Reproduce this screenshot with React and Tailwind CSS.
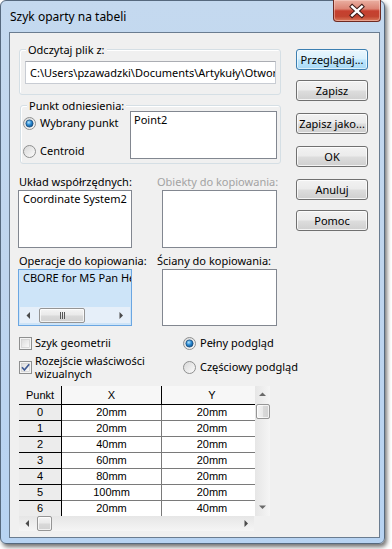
import React from 'react';

const rows = [
  ['0', '20mm', '20mm'],
  ['1', '20mm', '20mm'],
  ['2', '40mm', '20mm'],
  ['3', '60mm', '20mm'],
  ['4', '80mm', '20mm'],
  ['5', '100mm', '20mm'],
  ['6', '20mm', '40mm'],
];

const Radio = ({ checked }) => (
  <svg width="13" height="13" viewBox="0 0 13 13" className="shrink-0">
    <defs>
      <linearGradient id="rbg" x1="0" y1="0" x2="1" y2="1">
        <stop offset="0" stopColor="#d6d6d6" />
        <stop offset="1" stopColor="#fdfdfd" />
      </linearGradient>
      <radialGradient id="rdot" cx="0.4" cy="0.35" r="0.7">
        <stop offset="0" stopColor="#b6e6fd" />
        <stop offset="0.5" stopColor="#2a8ad4" />
        <stop offset="1" stopColor="#0d4d84" />
      </radialGradient>
    </defs>
    <circle cx="6.5" cy="6.5" r="6" fill="url(#rbg)" stroke="#8e8f8f" />
    {checked && <circle cx="6.5" cy="6.5" r="3.6" fill="url(#rdot)" stroke="#1c5180" strokeWidth="0.8" />}
  </svg>
);

const Checkbox = ({ checked }) => (
  <svg width="13" height="13" viewBox="0 0 13 13" className="shrink-0">
    <defs>
      <linearGradient id="cbg" x1="0" y1="0" x2="1" y2="1">
        <stop offset="0" stopColor="#dcdcdc" />
        <stop offset="1" stopColor="#fbfbfb" />
      </linearGradient>
    </defs>
    <rect x="0.5" y="0.5" width="12" height="12" fill="#f4f4f4" stroke="#8e8f8f" />
    <rect x="2.5" y="2.5" width="8" height="8" fill="url(#cbg)" stroke="#c8c8c8" strokeWidth="0.6" />
    {checked && <path d="M3 6.3 L5.4 9 L10.2 3.2" fill="none" stroke="#3f5a94" strokeWidth="1.7" />}
  </svg>
);

const Arrow = ({ dir, color = '#4b4b4b' }) => {
  const d = {
    left: 'M5 0 L5 7 L1.5 3.5 Z',
    right: 'M1.5 0 L1.5 7 L5 3.5 Z',
    up: 'M0 5 L7 5 L3.5 1.5 Z',
    down: 'M0 1.5 L7 1.5 L3.5 5 Z',
  }[dir];
  return (
    <svg width="7" height="7" viewBox="0 0 7 7">
      <path d={d} fill={color} />
    </svg>
  );
};

const Grip = () => (
  <svg width="7" height="7" viewBox="0 0 7 7">
    <g stroke="#555">
      <line x1="1.5" y1="0" x2="1.5" y2="7" />
      <line x1="3.5" y1="0" x2="3.5" y2="7" />
      <line x1="5.5" y1="0" x2="5.5" y2="7" />
    </g>
  </svg>
);

const thumbH =
  'rounded-[2px] border border-[#959595] bg-[linear-gradient(to_bottom,#f4f4f4_0%,#e9e9e9_48%,#d9d9d9_52%,#d2d2d2_100%)] shadow-[inset_0_0_0_1px_rgba(255,255,255,0.7)] flex items-center justify-center';
const thumbV =
  'rounded-[2px] border border-[#959595] bg-[linear-gradient(to_right,#f4f4f4_0%,#e9e9e9_48%,#d9d9d9_52%,#d2d2d2_100%)] shadow-[inset_0_0_0_1px_rgba(255,255,255,0.7)]';

const btnBase = 'flex h-[21px] w-[72px] items-center justify-center rounded-[3px] border text-[11px] leading-none text-black';
const btnNormal =
  'border-[#707070] bg-[linear-gradient(to_bottom,#f2f2f2_0%,#ebebeb_48%,#dddddd_52%,#cfcfcf_100%)] shadow-[inset_0_0_0_1px_rgba(255,255,255,0.75)]';
const btnFocus =
  'border-[#3c7fb1] bg-[linear-gradient(to_bottom,#eaf6fd_0%,#d9f0fc_48%,#bee6fd_52%,#a7d9f5_100%)] shadow-[inset_0_0_0_1px_rgba(255,255,255,0.6)]';

const CloseButton = () => (
  <div className="-mt-px mr-[3px] flex h-[22px] w-[48px] items-center justify-center rounded-b-[4px] border border-t-0 border-[#6e2a22] bg-[linear-gradient(to_bottom,#eab0a2_0%,#dc8474_42%,#c6402f_52%,#c2432f_78%,#da7a5c_100%)] shadow-[inset_0_0_0_1px_rgba(255,220,210,0.45)]">
    <svg width="48" height="22" viewBox="0 0 48 22">
      <g strokeLinecap="square">
        <path d="M19 6.5 L29 15.5 M29 6.5 L19 15.5" stroke="#3b1a16" strokeWidth="4.6" />
        <path d="M19 6.5 L29 15.5 M29 6.5 L19 15.5" stroke="#ffffff" strokeWidth="2.6" />
      </g>
    </svg>
  </div>
);

const Group = ({ label, className, children }) => (
  <div className={`relative rounded-[3px] border border-[#d5dfe5] shadow-[inset_1px_1px_0_#fff] ${className}`}>
    <span className="absolute -top-[8px] left-[6px] bg-[#f0f0f0] px-[2px] leading-[15px]">{label}</span>
    {children}
  </div>
);

const ListBox = ({ className, children }) => (
  <div className={`border border-[#828790] bg-white ${className}`}>{children}</div>
);

export default function App() {
  return (
    <div className="h-[549px] w-[392px] bg-white font-['Noto_Sans','Open_Sans',sans-serif] text-[11px] text-black">
      <div className="flex h-[544px] w-[385px] flex-col rounded-[6px] border border-[#56697e] bg-[linear-gradient(to_bottom,#c4d9ef_0%,#bfd5ee_50%,#b7d3f2_100%)] shadow-[2px_3px_4px_rgba(0,0,0,0.55)]">
        <div className="flex h-[31px] items-start justify-between">
          <span className="ml-[9px] mt-[8px] text-[12px] leading-[15px]">Szyk oparty na tabeli</span>
          <CloseButton />
        </div>

        <div className="ml-[8px] mr-[4px] flex h-[506px] border border-[#6a7c90] bg-[#f0f0f0]">
          {/* left column */}
          <div className="ml-[9px] flex w-[262px] flex-col pt-[16px]">
            <Group label="Odczytaj plik z:" className="h-[46px]">
              <div className="ml-[5px] mt-[11px] h-[23px] w-[251px] overflow-hidden whitespace-nowrap border border-[#c8ccd3] border-t-[#abadb3] bg-white pl-[4px] leading-[21px]">
                C:\Users\pzawadzki\Documents\Artykuły\Otwory
              </div>
            </Group>

            <Group label="Punkt odniesienia:" className="ml-[1px] mt-[10px] h-[59px] w-[261px]">
              <div className="flex pt-[5px]">
                <div className="ml-[2px] flex w-[107px] flex-col pt-[4px]">
                  <div className="flex h-[16px] items-center gap-[4px]">
                    <Radio checked />
                    <span>Wybrany punkt</span>
                  </div>
                  <div className="mt-[12px] flex h-[16px] items-center gap-[4px]">
                    <Radio />
                    <span>Centroid</span>
                  </div>
                </div>
                <ListBox className="h-[48px] w-[147px] pl-[3px] leading-[15px]">Point2</ListBox>
              </div>
            </Group>

            <div className="mt-[10px] grid grid-cols-[138px_1fr] leading-[15px]">
              <span>Układ współrzędnych:</span>
              <span className="text-[#a3a3a3]">Obiekty do kopiowania:</span>
            </div>
            <div className="mt-[1px] grid grid-cols-[138px_1fr]">
              <ListBox className="-ml-px h-[58px] w-[114px] pl-[4px] leading-[15px]">Coordinate System2</ListBox>
              <ListBox className="ml-[5px] h-[58px] w-[115px]" />
            </div>

            <div className="mt-[5px] grid grid-cols-[138px_1fr] leading-[15px]">
              <span>Operacje do kopiowania:</span>
              <span>Ściany do kopiowania:</span>
            </div>
            <div className="mt-[1px] grid grid-cols-[138px_1fr]">
              <div className="-ml-px flex h-[57px] w-[114px] flex-col border border-[#6aa6e2] bg-[#cde4f8]">
                <div className="overflow-hidden whitespace-nowrap pl-[4px] leading-[15px]">CBORE for M5 Pan Head</div>
                <div className="mx-px mb-[2px] mt-auto flex h-[16px] items-center bg-[#e6eff9]">
                  <div className="flex w-[17px] justify-center">
                    <Arrow dir="left" />
                  </div>
                  <div className={`ml-[2px] h-[15px] w-[46px] ${thumbH}`}>
                    <Grip />
                  </div>
                  <div className="flex-1" />
                  <div className="flex w-[17px] justify-center">
                    <Arrow dir="right" />
                  </div>
                </div>
              </div>
              <ListBox className="ml-[5px] h-[57px] w-[115px]" />
            </div>

            {/* options */}
            <div className="mt-[9px] flex">
              <div className="flex w-[164px] shrink-0 flex-col">
                <div className="flex h-[16px] items-center gap-[3px]">
                  <Checkbox />
                  <span>Szyk geometrii</span>
                </div>
                <div className="mt-[3px] flex items-center gap-[3px]">
                  <Checkbox checked />
                  <span className="leading-[13px]">
                    Rozejście właściwości
                    <br />
                    wizualnych
                  </span>
                </div>
              </div>
              <div className="flex shrink-0 flex-col whitespace-nowrap">
                <div className="flex h-[16px] items-center gap-[4px]">
                  <Radio checked />
                  <span>Pełny podgląd</span>
                </div>
                <div className="mt-[8px] flex h-[16px] items-center gap-[4px]">
                  <Radio />
                  <span>Częściowy podgląd</span>
                </div>
              </div>
            </div>

            {/* table */}
            <div className="mt-[6px] flex w-[252px] flex-col font-['Liberation_Sans',Arial,sans-serif] text-[11px]">
              <div className="flex h-[130px]">
                <div className="w-[236px] overflow-hidden">
                  <div className="flex h-[19px] w-[243px] border-b border-black">
                    <div className="flex w-[43px] items-center justify-center border-r border-black bg-[#f0f0f0]">Punkt</div>
                    <div className="flex w-[100px] items-center justify-center border-r border-black bg-[#f7f7f7]">X</div>
                    <div className="flex w-[100px] items-center justify-center bg-[#f7f7f7]">Y</div>
                  </div>
                  {rows.map(([p, x, y]) => (
                    <div key={p} className="flex h-[16px] w-[243px]">
                      <div className="flex w-[43px] items-center justify-center border-b border-r border-black bg-[#ececec]">{p}</div>
                      <div className="flex w-[100px] items-center justify-center border-b border-r border-[#7a7a7a] bg-white">{x}</div>
                      <div className="flex w-[100px] items-center justify-center border-b border-[#7a7a7a] bg-white">{y}</div>
                    </div>
                  ))}
                </div>
                <div className="flex w-[15px] flex-col bg-[linear-gradient(to_right,#e6e6e6,#f5f5f5)]">
                  <div className="flex h-[17px] items-center justify-center">
                    <Arrow dir="up" color="#6a6a6a" />
                  </div>
                  <div className={`ml-px mt-px h-[15px] w-[14px] ${thumbV}`} />
                  <div className="flex-1" />
                  <div className="flex h-[17px] items-center justify-center">
                    <Arrow dir="down" color="#6a6a6a" />
                  </div>
                </div>
              </div>
              <div className="flex h-[15px] w-[235px] items-center bg-[linear-gradient(to_bottom,#e6e6e6,#f5f5f5)]">
                <div className="flex w-[17px] justify-center">
                  <Arrow dir="left" />
                </div>
                <div className={`ml-px h-[15px] w-[15px] ${thumbH}`} />
                <div className="flex-1" />
                <div className="flex w-[15px] justify-center">
                  <Arrow dir="right" />
                </div>
              </div>
            </div>
          </div>

          {/* buttons */}
          <div className="ml-[15px] flex flex-col pt-[16px]">
            <div className={`${btnBase} ${btnFocus}`}>Przeglądaj...</div>
            <div className={`${btnBase} ${btnNormal} mt-[10px]`}>Zapisz</div>
            <div className={`${btnBase} ${btnNormal} mt-[12px]`}>Zapisz jako...</div>
            <div className={`${btnBase} ${btnNormal} mt-[12px]`}>OK</div>
            <div className={`${btnBase} ${btnNormal} mt-[12px]`}>Anuluj</div>
            <div className={`${btnBase} ${btnNormal} mt-[10px]`}>Pomoc</div>
          </div>
        </div>
      </div>
    </div>
  );
}
